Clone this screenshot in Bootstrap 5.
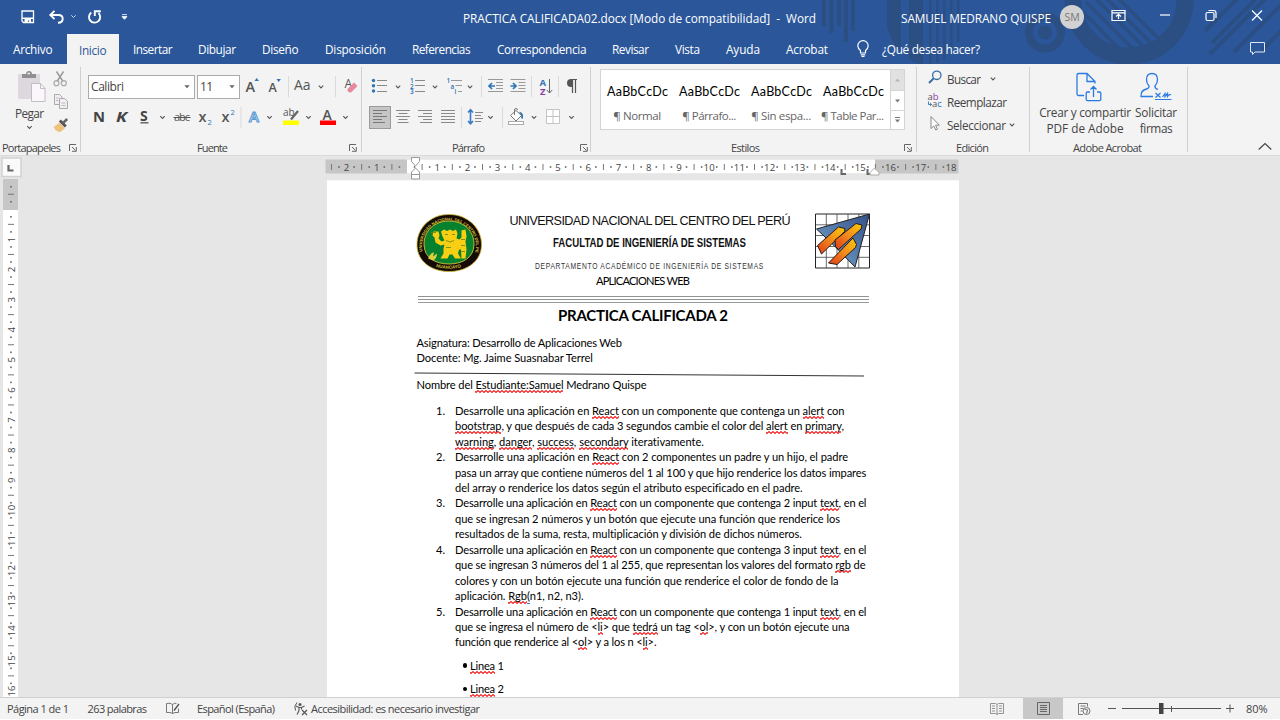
<!DOCTYPE html>
<html lang="es">
<head>
<meta charset="utf-8">
<meta name="viewport" content="width=device-width, initial-scale=1">
<title>PRACTICA CALIFICADA02.docx - Word</title>
<link href="https://cdn.jsdelivr.net/npm/bootstrap@5.3.0/dist/css/bootstrap.min.css" rel="stylesheet">
<style>
:root{--word:#2b579a;--word-dark:#2b4e83;--ink:#444;}
html,body{height:720px;overflow:hidden}
body{font-family:"Open Sans","Noto Sans",sans-serif;font-size:11.5px;line-height:14px;color:var(--ink);background:#e6e6e6;width:1280px}
svg{display:block;overflow:visible;flex:none}
.fit{display:inline-block;white-space:nowrap;transform-origin:0 50%}
.strip{display:grid;align-items:center}
.word-head{background:var(--word);height:64px;color:#fff;position:relative;flex:none}
.decor{position:absolute;inset:0;overflow:hidden}
.titlebar{height:34px;position:relative;grid-template-columns:28px 22px 17px 33px 342px 438px 159px 52px 48px 46px 46px 28px;padding-left:21px}
.titlebar .fit{font-size:11.8px;position:relative;top:1px}
.avatar{width:24px;height:24px;border-radius:50%;background:#d2d2d2;color:#777;font-size:10.5px}
.tabs{height:30px;position:relative;grid-template-columns:54px 66px 65px 64px 63px 87px 85px 115px 63px 51px 60px 71px 25px 368px 20px;padding-left:13px}
.tabs .fit{font-size:11.8px;position:relative;top:.7px}
.tabs .tab-on{background:#f3f3f3;color:var(--word);height:30px;width:52px;padding-left:12px}
.ribbon{background:#f3f3f3;height:92px;flex:none;border-bottom:1px solid #dadada}
.rgroup{border-right:1px solid #d0d0d0;margin:3px 0 3px;height:85px;display:flex;flex-direction:column;flex:none}
.rbody{height:73.5px;flex:none}
.rlabel{height:14px;font-size:11px;display:grid;align-items:center}
.g1{width:81px}.g1 .rlabel{grid-template-columns:67px 10px;padding-left:2px}
.g2{width:281px}.g2 .rlabel{grid-template-columns:152px 10px;padding-left:116px}
.g3{width:229px}.g3 .rlabel{grid-template-columns:128px 10px;padding-left:90px}
.g4{width:326px}.g4 .rlabel{grid-template-columns:173px 10px;padding-left:140px}
.g5{width:113px}.g5 .rlabel{padding-left:39px}
.g6{width:158px}.g6 .rlabel{padding-left:43px}
.g2 .rbody,.g3 .rbody{padding-top:7px}
.r25{height:25px;margin-bottom:6px}
.f1{grid-template-columns:109px 49px 23px 19px 6px 24px 16px 9px 20px;padding-left:7px}
.f2{grid-template-columns:22px 22px 19px 15px 25px 23px 18px 9px 15px 18px 21px 16px 22px 20px;padding-left:13px}
.p1{grid-template-columns:20px 17px 20px 17px 18px 16px 7px 22px 19px 9px 18px 9px 20px;padding-left:10px}
.p2{grid-template-columns:27px 22px 22px 19px 7px 16px 17px 7px 20px 18px 19px 18px;padding-left:7px}
.combo{background:#fff;border:1px solid #ababab;height:24px;font-size:12px;display:flex;align-items:center;justify-content:space-between;padding:0 4px 0 2px}
.combo-a{width:107px}.combo-b{width:43px}
.gallery{width:305px;height:61px;margin:2px 0 0 9px;background:#fff;border:1px solid #d4d4d4;display:flex}
.style-item{width:72px;padding-left:6px;flex:none;height:59px}
.style-item .samp{font-family:Lato,sans-serif;font-size:12.5px;color:#000;height:14px;margin-top:15px}
.style-item .nm{margin-top:10px;width:60px;text-align:center;color:#666;font-size:11.5px}
.scroller{width:15px;border-left:1px solid #d4d4d4;margin-left:1px}
.scroller div{height:20px;border-bottom:1px solid #d4d4d4}
.scroller div:first-child{background:#e1e1e1;height:21px}
.scroller div:last-child{border:0;height:18px}
.edit{display:grid;grid-template-columns:19px 43px 20px;height:23px;align-items:center;padding-left:11px;font-size:11.7px}
.edit.wide{grid-template-columns:19px 62px 20px}
.big{font-size:11.8px;line-height:16px}
.work{height:541px;flex:none;background:#e6e6e6;display:grid;grid-template-columns:327px 632px 1fr;overflow:hidden}
.sheet{background:#fff;height:520px;font-family:Lato,Carlito,sans-serif;font-size:11.1px;line-height:15.43px;color:#000;border-top:1px solid #f8f8f8}
.doc-head{display:grid;grid-template-columns:65px 26px 285px 20px 60px;padding:33px 0 0 90px;height:97px}
.dh{text-align:center;font-family:"Liberation Sans",sans-serif;color:#111}
.dh div{display:flex}
.dh1{font-size:12.6px;height:14px;padding-left:1.5px}
.dh2{font-size:12px;font-weight:700;height:15px;margin-top:8px;padding-left:45px}
.dh3{font-size:9.6px;letter-spacing:1px;height:14px;margin-top:7px;padding-left:27px;color:#333}
.rule3{width:451px;height:7px;margin-left:91px;border-top:1px solid #8f9491;border-bottom:1px solid #999}
.rule3 i{display:block;height:1px;margin-top:2px;background:#8f9491}
.web{padding-left:269px;margin-top:-6px;height:20px}
.h-title{font-weight:700;font-size:15px;line-height:18px;padding-left:231px;color:#000;height:29px;margin-top:2.5px}
.para{padding-left:89.5px}
ol.tasks{list-style:none;margin:17.5px 0 0;padding:0}
ol.tasks li{display:grid;grid-template-columns:19px 1fr;padding-left:109px}
ol.tasks li div>span{display:block;width:max-content}
.bul{padding-left:134px;margin-top:8px;display:flex;align-items:center}
.bul b{display:block;width:4.5px;height:4.5px;border-radius:50%;background:#000;margin:0 3px 0 1.5px}
.sq{background:url("data:image/svg+xml,%3Csvg xmlns='http://www.w3.org/2000/svg' width='4' height='3'%3E%3Cpath d='M-1 .5L1 2.5L3 .5L5 2.5' fill='none' stroke='%23f02020' stroke-width='1.1'/%3E%3C/svg%3E") repeat-x 0 100%;padding-bottom:2px}
.sq.gr{background:linear-gradient(#3b6fe0,#3b6fe0) no-repeat 0 100%/100% 1.5px}
.status{height:22px;background:#f3f3f3;border-top:1px solid #d0d0d0;flex:none;grid-template-columns:80.5px 78.500px 31px 97px 17px 679px 33px 40px 14px 30px 15px 105px 19px 30px;padding-left:7px;font-size:11px}
.view-on{background:#c8c8c8;height:21px}
</style>
</head>
<body class="d-flex flex-column">
<svg width="0" height="0" class="position-absolute">
 <symbol id="chev" viewBox="0 0 6 4"><path d="M.8 .7L3 2.9L5.2 .7" fill="none" stroke="#555" stroke-width="1.1"/></symbol>
 <symbol id="launch" viewBox="0 0 8 8"><path d="M.5 7V.5H7M3 3L6.5 6.5M7.3 3V7.3H3" fill="none" stroke="#666" stroke-width="1"/></symbol>
 <symbol id="tri" viewBox="0 0 6 4"><path d="M.3 .3H5.700L3 3.3Z" fill="#666"/></symbol>
</svg>

<header class="word-head">
 <svg class="decor" width="1280" height="64">
  <g fill="#2b4e83">
   <path d="M822 0h4v26h-4zM829.500 0h4v33h-4zM837 0h4v26h-4zM844 0h4v42h-4zM851 0h4v31h-4z"/>
   <path d="M887 0h14v52q-9-9-14-24zM909 0h14v64h-4q-5-2-10-5zM929 0h2.500v64h-2.500zM936 0h2.500v63h-2.500zM943 0h2.500v60h-2.500zM950 0h2.500v54h-2.500zM957 0h2.500v42h-2.500z"/>
   <circle cx="1045" cy="32.500" r="7"/>
  </g>
  <g fill="none" stroke="#2b4e83">
   <circle cx="1045" cy="32.500" r="16" stroke-width="8"/>
   <circle cx="1129" cy="0" r="56" stroke-width="17"/>
   <path d="M1083 12L1127 57M1086 2L1138 54M1095-2L1146 49M1106-2L1155 47M1118-2L1163 43" stroke-width="3.500"/>
   <path d="M1205 31L1238-2M1212 43L1257-2M1210 54L1266-2M1234 52L1288-2M1262 50L1292 20" stroke-width="4"/>
  </g>
 </svg>
 <div class="strip titlebar">
  <svg width="14" height="34" viewBox="21 0 14 34"><path d="M22 11h11.500v11.500H23.500L22 21z" fill="none" stroke="#fff" stroke-width="1.300"/><path d="M22 17.500h11.500v1.500h-11.500zM24.500 19h6.500v4h-1.800v-2.500h-1.200v2.500h-3.500z" fill="#fff"/></svg>
  <svg width="16" height="34" viewBox="49 0 16 34"><path d="M54.500 10.800L50.300 15L54.500 19.200M50.500 15H58.500C61.300 15 62.700 16.800 62.700 18.800S61.200 22.800 58 22.800" fill="none" stroke="#fff" stroke-width="1.900"/></svg>
  <svg width="6" height="34" viewBox="71 0 6 34"><path d="M71.300 15.300L73.500 17.500L75.700 15.300" fill="none" stroke="#cdd8ea" stroke-width="1"/></svg>
  <svg width="14" height="34" viewBox="88 0 14 34"><path d="M91.300 12.500A5.600 5.600 0 1 0 98.500 13M94.800 16V11.200H100.800" fill="none" stroke="#fff" stroke-width="1.900"/></svg>
  <svg width="6" height="34" viewBox="121 0 6 34"><path d="M122 14.600h5M122 16.600h5L124.500 19.300z" stroke="#fff" fill="#fff" stroke-width=".8"/></svg>
  <span><span class="fit" data-w="353">PRACTICA CALIFICADA02.docx [Modo de compatibilidad]&nbsp; -&nbsp; Word</span></span>
  <span><span class="fit" data-w="150">SAMUEL MEDRANO QUISPE</span></span>
  <span class="avatar d-flex align-items-center justify-content-center">SM</span>
  <svg width="14" height="34" viewBox="1112 0 14 34"><path d="M1112 10.500h13v10h-13zM1112 12.800h13M1118.500 19v-4.500M1116 16.500l2.500-2.300l2.500 2.300" fill="none" stroke="#fff" stroke-width="1.200"/></svg>
  <svg width="11" height="34" viewBox="1160 0 11 34"><path d="M1160 15h10" stroke="#fff" stroke-width="1.200"/></svg>
  <svg width="11" height="34" viewBox="1206 0 11 34"><rect x="1206" y="12.500" width="8" height="8" rx="1.500" fill="none" stroke="#fff" stroke-width="1.200"/><path d="M1208.500 10.500h5q2.500 0 2.500 2.500v5" fill="none" stroke="#fff" stroke-width="1.200"/></svg>
  <svg width="11" height="34" viewBox="1252 0 11 34"><path d="M1252 10.500l10 10M1262 10.500l-10 10" stroke="#fff" stroke-width="1.200"/></svg>
 </div>
 <nav class="strip tabs">
  <span><span class="fit" data-w="39.500">Archivo</span></span>
  <span class="tab-on d-flex align-items-center"><span class="fit" data-w="27.500">Inicio</span></span>
  <span><span class="fit" data-w="39.500">Insertar</span></span>
  <span><span class="fit" data-w="38">Dibujar</span></span>
  <span><span class="fit" data-w="36.500">Diseño</span></span>
  <span><span class="fit" data-w="61">Disposición</span></span>
  <span><span class="fit" data-w="58.500">Referencias</span></span>
  <span><span class="fit" data-w="89.500">Correspondencia</span></span>
  <span><span class="fit" data-w="37">Revisar</span></span>
  <span><span class="fit" data-w="25">Vista</span></span>
  <span><span class="fit" data-w="34">Ayuda</span></span>
  <span><span class="fit" data-w="42">Acrobat</span></span>
  <svg width="12" height="30" viewBox="857 34 12 30"><path d="M860.500 53V50.500Q857.800 48.500 857.800 45.800A5.200 5.200 0 0 1 868.200 45.800Q868.200 48.500 865.500 50.500V53zM860.800 54.800h4.400M861.500 56.500h3" fill="none" stroke="#fff" stroke-width="1.200"/></svg>
  <span><span class="fit" data-w="98">¿Qué desea hacer?</span></span>
  <svg width="16" height="30" viewBox="1250 34 16 30"><path d="M1250.500 42.500h14v9.500h-9.500l-2.500 2.500v-2.500h-2z" fill="none" stroke="#dfe7f3" stroke-width="1"/></svg>
 </nav>
</header>

<section class="ribbon d-flex">
 <div class="rgroup g1">
  <div class="rbody d-flex">
   <div style="width:53px">
    <svg width="53" height="38" viewBox="0 67 53 38"><rect x="18" y="74" width="22" height="25" rx="1" fill="#dcd8de"/><path d="M22 74h4q0-3 3-3t3 3h4v4H22z" fill="#8f8f8f"/><rect x="27.500" y="72.800" width="2.500" height="1.500" fill="#f3f3f3"/><path d="M31.500 83.500h9l4.500 5v13H31.500z" fill="#faf6fb" stroke="#bdb7c0" stroke-width=".9"/><path d="M40.500 83.500v5h4.500" fill="none" stroke="#bdb7c0" stroke-width=".9"/></svg>
    <div class="big ps-3"><span class="fit" data-w="29" style="margin-left:-1px">Pegar</span></div>
    <svg width="53" height="10" viewBox="0 121 53 10"><use href="#chev" x="26.500" y="125.500" width="6" height="4"/></svg>
   </div>
   <svg width="18" height="70" viewBox="53 67 18 70">
    <path d="M56.500 71.500L63 81.500M63.500 71.500L57 81.500" stroke="#999" stroke-width="1.400"/><circle cx="56.500" cy="83.200" r="2.500" fill="none" stroke="#aaa" stroke-width="1.200"/><circle cx="63.800" cy="83.200" r="2.500" fill="none" stroke="#aaa" stroke-width="1.200"/>
    <path d="M54.500 94.500h5l2.500 2.500v7.500h-7.500z" fill="#f3eef4" stroke="#aaa"/><path d="M59.500 98.500h5l3 2.800v7.200h-8z" fill="#f3eef4" stroke="#aaa"/><path d="M61.500 103h4M61.500 105.500h4M56 98h2.500M56 100.500h2.500" stroke="#bbb"/>
    <path d="M53.500 127l6-4.300l5.500 5.500l-5 4q-4.500-1-6.500-5.200z" fill="#ecc27d"/><path d="M58.800 121.500l6 6l2-2l-6-6z" fill="#555"/><path d="M63.500 122.500L67.200 119" stroke="#666" stroke-width="2.500"/>
   </svg>
  </div>
  <div class="rlabel"><span><span class="fit" data-w="59">Portapapeles</span></span><svg width="8" height="8"><use href="#launch" width="8" height="8"/></svg></div>
 </div>

 <div class="rgroup g2">
  <div class="rbody">
   <div class="strip r25 f1">
    <span class="combo combo-a"><span class="fit" data-w="33">Calibri</span><svg width="6" height="4"><use href="#tri" width="6" height="4"/></svg></span>
    <span class="combo combo-b"><span class="fit" data-w="13">11</span><svg width="6" height="4"><use href="#tri" width="6" height="4"/></svg></span>
    <svg width="16" height="25" viewBox="246 74 16 25"><text x="245.500" y="92" font-size="14.500" font-weight="600" fill="#555">A</text><path d="M254.500 81l2.200-3l2.200 3z" fill="#2f74b5"/></svg>
    <svg width="16" height="25" viewBox="269 74 16 25"><text x="268.500" y="92" font-size="12.500" font-weight="600" fill="#555">A</text><path d="M276.500 79l2.200 3l2.200-3z" fill="#2f74b5"/></svg>
    <svg width="2" height="25" viewBox="288 74 2 25"><path d="M288.500 76v21" stroke="#dadada"/></svg>
    <svg width="18" height="25" viewBox="294 74 18 25"><text x="294" y="90" font-size="14" fill="#555">Aa</text></svg>
    <svg width="6" height="4"><use href="#chev" width="6" height="4"/></svg>
    <svg width="2" height="25" viewBox="327 74 2 25"><path d="M328.500 76v21" stroke="#dadada"/></svg>
    <svg width="16" height="25" viewBox="336 74 16 25"><text x="337.500" y="88" font-size="12" fill="#555">A</text><path d="M340.500 89l6.500-6.500l3.500 3.500l-6.500 6.500q-4 0-3.500-3.500z" fill="#e8889c"/></svg>
   </div>
   <div class="strip r25 f2">
    <svg width="14" height="25" viewBox="94 105 14 25"><text x="93" y="122" font-size="15" font-weight="700" fill="#444" textLength="12" lengthAdjust="spacingAndGlyphs">N</text></svg>
    <svg width="14" height="25" viewBox="116 105 14 25"><text x="116" y="122" font-size="15" font-weight="700" font-style="italic" fill="#444" textLength="11" lengthAdjust="spacingAndGlyphs">K</text></svg>
    <svg width="12" height="25" viewBox="138 105 12 25"><text x="140" y="121" font-size="14" font-weight="700" fill="#444">S</text><path d="M140.500 122.800h8" stroke="#444" stroke-width="1.200"/></svg>
    <svg width="12" height="25" viewBox="157 105 12 25"><use href="#chev" x="159.500" y="115.500" width="6" height="4"/></svg>
    <svg width="18" height="25" viewBox="172 105 18 25"><text x="174" y="121" font-size="11" fill="#555" textLength="16">abc</text><path d="M173.500 117.500h17" stroke="#555"/></svg>
    <svg width="16" height="25" viewBox="197 105 16 25"><text x="198.500" y="122" font-size="14.500" font-weight="600" fill="#555">x</text><text x="207.500" y="124.500" font-size="7.500" fill="#2f74b5">2</text></svg>
    <svg width="16" height="25" viewBox="220 105 16 25"><text x="221.500" y="122" font-size="14.500" font-weight="600" fill="#555">x</text><text x="230.500" y="114.500" font-size="7.500" fill="#2f74b5">2</text></svg>
    <svg width="4" height="25" viewBox="238 105 4 25"><path d="M241 107v21" stroke="#dadada"/></svg>
    <svg width="14" height="25" viewBox="247 105 14 25"><text x="249" y="122" font-size="15" font-weight="600" fill="#fff" stroke="#5b9bd5" stroke-width="1.100">A</text></svg>
    <svg width="10" height="25" viewBox="262 105 10 25"><use href="#chev" x="266.500" y="115.500" width="6" height="4"/></svg>
    <svg width="18" height="25" viewBox="280 105 18 25"><text x="283" y="116" font-size="10" fill="#555">ab</text><path d="M291 119.500L298 111" stroke="#666" stroke-width="2.200"/><rect x="283" y="120.500" width="16" height="4.500" fill="#ff0"/></svg>
    <svg width="10" height="25" viewBox="301 105 10 25"><use href="#chev" x="305.500" y="115.500" width="6" height="4"/></svg>
    <svg width="18" height="25" viewBox="317 105 18 25"><text x="322.500" y="119.500" font-size="14" font-weight="600" fill="#555">A</text><rect x="320" y="120.500" width="16" height="4.500" fill="#f00"/></svg>
    <svg width="10" height="25" viewBox="339 105 10 25"><use href="#chev" x="342.500" y="115.500" width="6" height="4"/></svg>
   </div>
  </div>
  <div class="rlabel"><span><span class="fit" data-w="31">Fuente</span></span><svg width="8" height="8"><use href="#launch" width="8" height="8"/></svg></div>
 </div>

 <div class="rgroup g3">
  <div class="rbody">
   <div class="strip r25 p1">
    <svg width="18" height="25" viewBox="373 74 18 25"><path d="M378 80.500h10M378 85.500h10M378 91.500h10" stroke="#888"/><circle cx="374.500" cy="80.500" r="1.700" fill="#2f74b5"/><circle cx="374.500" cy="85.800" r="1.700" fill="#2f74b5"/><circle cx="374.500" cy="91" r="1.700" fill="#2f74b5"/></svg>
    <svg width="8" height="25" viewBox="392 74 8 25"><use href="#chev" x="395" y="85" width="6" height="4"/></svg>
    <svg width="18" height="25" viewBox="409 74 18 25"><path d="M415 80.500h10M415 85.500h10M415 91.500h10" stroke="#888"/><g font-size="6.500" font-weight="600" fill="#2f74b5"><text x="410" y="83">1</text><text x="410" y="88.500">2</text><text x="410" y="94">3</text></g></svg>
    <svg width="8" height="25" viewBox="429 74 8 25"><use href="#chev" x="432" y="85" width="6" height="4"/></svg>
    <svg width="18" height="25" viewBox="446 74 18 25"><path d="M451 80.500h11M455.500 85.500h6.500M458 91.500h4" stroke="#999"/><g font-size="6.500" font-weight="600" fill="#2f74b5"><text x="446.500" y="83">1</text><text x="450.500" y="88.500">a</text><text x="454.500" y="93.500">i</text></g></svg>
    <svg width="8" height="25" viewBox="464 74 8 25"><use href="#chev" x="467" y="85" width="6" height="4"/></svg>
    <svg width="2" height="25" viewBox="480 74 2 25"><path d="M481.500 76v21" stroke="#dadada"/></svg>
    <svg width="16" height="25" viewBox="487 74 16 25"><path d="M488 79.500h15M496 82.500h7M496 85.500h7M496 88.500h7M488 91.500h15" stroke="#999"/><path d="M495 86h-5M492 83l-3 3l3 3" fill="none" stroke="#2f74b5" stroke-width="1.700"/></svg>
    <svg width="16" height="25" viewBox="509 74 16 25"><path d="M510.500 79.500h15M518.500 82.500h7M518.500 85.500h7M518.500 88.500h7M510.500 91.500h15" stroke="#999"/><path d="M510.500 86h5M513 83l3 3l-3 3" fill="none" stroke="#2f74b5" stroke-width="1.700"/></svg>
    <svg width="4" height="25" viewBox="528 74 4 25"><path d="M531.500 76v21" stroke="#dadada"/></svg>
    <svg width="16" height="25" viewBox="537 74 16 25"><text x="539.500" y="86" font-size="9.500" font-weight="700" fill="#2f74b5">A</text><text x="540" y="94.500" font-size="9.500" font-weight="700" fill="#8a3fa8">Z</text><path d="M549.500 79v14M546.800 90l2.700 3l2.700-3" fill="none" stroke="#666"/></svg>
    <svg width="4" height="25" viewBox="555 74 4 25"><path d="M558.500 76v21" stroke="#dadada"/></svg>
    <svg width="14" height="25" viewBox="564 74 14 25"><path d="M577 79.500h-6M572.500 79.500v13.500M575.500 79.500v13.500" fill="none" stroke="#555" stroke-width="1.200"/><path d="M572 79h-1q-4 0-4 4t4 4h1z" fill="#555"/></svg>
   </div>
   <div class="strip r25 p2">
    <svg width="23" height="25" viewBox="369 105 23 25"><rect x="369.500" y="106.500" width="21" height="22" fill="#c6c6c6" stroke="#9b9b9b"/><path d="M373 110.500h14M373 113.500h9M373 116.500h14M373 119.500h9M373 122.500h12" stroke="#777"/></svg>
    <svg width="16" height="25" viewBox="396 105 16 25"><path d="M396 110.500h14M398.500 113.500h9M396 116.500h14M398.500 119.500h9M397.500 122.500h11" stroke="#888"/></svg>
    <svg width="16" height="25" viewBox="418 105 16 25"><path d="M418 110.500h14M423 113.500h9M418 116.500h14M423 119.500h9M420 122.500h12" stroke="#888"/></svg>
    <svg width="16" height="25" viewBox="440 105 16 25"><path d="M441 110.500h14M441 113.500h14M441 116.500h14M441 119.500h14M441 122.500h14" stroke="#888"/></svg>
    <svg width="4" height="25" viewBox="459 105 4 25"><path d="M461.500 107v21" stroke="#dadada"/></svg>
    <svg width="16" height="25" viewBox="466 105 16 25"><path d="M475 112.500h8M475 115.500h6M475 118.500h8M475 121.500h6" stroke="#888"/><path d="M470.500 110v13.500M468 112.500l2.500-2.700l2.500 2.700M468 121l2.500 2.700l2.500-2.700" fill="none" stroke="#3a78c9" stroke-width="1.600"/></svg>
    <svg width="10" height="25" viewBox="482 105 10 25"><use href="#chev" x="487.500" y="115.500" width="6" height="4"/></svg>
    <svg width="4" height="25" viewBox="499 105 4 25"><path d="M502.500 107v21" stroke="#dadada"/></svg>
    <svg width="18" height="25" viewBox="506 105 18 25"><path d="M510.500 115.500l5.500-5l5.500 5l-5.500 5.500z" fill="#fff" stroke="#777"/><path d="M514.500 115v-5q0-1.500 1.500-1.500t1.500 1.500" fill="none" stroke="#777"/><path d="M519.500 112.500q3.500 1 2.500 6" fill="none" stroke="#2f74b5" stroke-width="1.800"/><rect x="508.500" y="121.500" width="15" height="3" fill="#fff" stroke="#aaa"/></svg>
    <svg width="10" height="25" viewBox="526 105 10 25"><use href="#chev" x="531" y="115.500" width="6" height="4"/></svg>
    <svg width="18" height="25" viewBox="544 105 18 25"><path d="M546.500 109.500h13v14h-13zM553 109.500v14M546.500 116.500h13" fill="#fff" stroke="#c4c4c4"/></svg>
    <svg width="10" height="25" viewBox="563 105 10 25"><use href="#chev" x="568.500" y="115.500" width="6" height="4"/></svg>
   </div>
  </div>
  <div class="rlabel"><span><span class="fit" data-w="33">Párrafo</span></span><svg width="8" height="8"><use href="#launch" width="8" height="8"/></svg></div>
 </div>

 <div class="rgroup g4">
  <div class="rbody">
   <div class="gallery">
    <div class="style-item"><div class="samp"><span class="fit" data-w="61">AaBbCcDc</span></div><div class="nm"><span class="fit" data-w="48">¶ Normal</span></div></div>
    <div class="style-item"><div class="samp"><span class="fit" data-w="61">AaBbCcDc</span></div><div class="nm"><span class="fit" data-w="54">¶ Párrafo...</span></div></div>
    <div class="style-item"><div class="samp"><span class="fit" data-w="61">AaBbCcDc</span></div><div class="nm"><span class="fit" data-w="60">¶ Sin espa...</span></div></div>
    <div class="style-item"><div class="samp"><span class="fit" data-w="61">AaBbCcDc</span></div><div class="nm"><span class="fit" data-w="63" style="margin-left:-2px">¶ Table Par...</span></div></div>
    <div class="scroller">
     <div class="d-flex align-items-center justify-content-center"><svg width="5" height="4"><path d="M0 3.500L2.500 .5L5 3.500z" fill="#b5b5b5"/></svg></div>
     <div class="d-flex align-items-center justify-content-center"><svg width="5" height="4"><path d="M0 .5h5L2.500 3.500z" fill="#777"/></svg></div>
     <div class="d-flex align-items-center justify-content-center"><svg width="5" height="6"><path d="M0 0h5v1H0zM0 2.500h5L2.500 5.500z" fill="#777"/></svg></div>
    </div>
   </div>
  </div>
  <div class="rlabel"><span><span class="fit" data-w="29">Estilos</span></span><svg width="8" height="8"><use href="#launch" width="8" height="8"/></svg></div>
 </div>

 <div class="rgroup g5">
  <div class="rbody">
   <div class="edit"><svg width="16" height="23" viewBox="928 67 16 23"><circle cx="936.800" cy="75.300" r="4.200" fill="none" stroke="#3a6ea5" stroke-width="1.300"/><path d="M933.500 78.500L929 83" stroke="#3a6ea5" stroke-width="2"/></svg><span><span class="fit" data-w="34">Buscar</span></span><svg width="6" height="4"><use href="#chev" width="6" height="4"/></svg></div>
   <div class="edit wide"><svg width="16" height="23" viewBox="928 90 16 23"><text x="927.500" y="100" font-size="9.500" fill="#555">a<tspan fill="#8a3fa8">b</tspan></text><text x="932" y="107" font-size="9.500" fill="#555">a<tspan fill="#2f74b5">c</tspan></text><path d="M928.500 101.500v3h3M930 103l1.700 1.500L930 106" fill="none" stroke="#2f74b5" stroke-width=".9"/></svg><span><span class="fit" data-w="60">Reemplazar</span></span></div>
   <div class="edit wide"><svg width="16" height="23" viewBox="928 113 16 23"><path d="M931 116.500v12l2.800-2.500l2 4l1.700-.9l-2-3.900h3.800z" fill="#fff" stroke="#888"/></svg><span><span class="fit" data-w="59">Seleccionar</span></span><svg width="6" height="4"><use href="#chev" width="6" height="4"/></svg></div>
  </div>
  <div class="rlabel"><span><span class="fit" data-w="33">Edición</span></span></div>
 </div>

 <div class="rgroup g6">
  <div class="rbody d-flex">
   <div class="big text-center" style="width:96px;margin-left:7px">
    <svg width="96" height="37" viewBox="1037 67 96 37"><g fill="none" stroke="#2a7ae4" stroke-width="1.300"><path d="M1084 95.500h-5.500q-1.500 0-1.500-1.500V75q0-1.500 1.500-1.500H1087l8 8v2M1087 73.500v8h8"/><path d="M1090 92h-2.500q-1.300 0-1.300 1.300v6q0 1.300 1.300 1.300h12q1.300 0 1.300-1.300v-6q0-1.300-1.300-1.300h-2.500M1093.500 97v-10M1090.500 89.500l3-3l3 3"/></g></svg>
    <span class="fit" data-w="92">Crear y compartir</span><br><span class="fit" data-w="77">PDF de Adobe</span>
   </div>
   <div class="big text-center" style="width:44px;margin-left:1px">
    <svg width="44" height="37" viewBox="1134 67 44 37"><g fill="none" stroke="#2a7ae4" stroke-width="1.300"><path d="M1153 96.500h-12q-.5-6 5.500-7.500q3-.8 2.500-3q-2.500-2.500-2.500-6.500q0-6 5.500-6t5.500 6q0 4-2.500 6.500q-.3 2.500 3 3.500"/><path d="M1155 99.500h16.500M1155.500 93l5 4.500M1160.500 93l-5 4.500M1162.500 97l2.500-3.500v3l2.500-3v3q2-3 3.500-1.500" stroke-width="1.200"/></g></svg>
    <span class="fit" data-w="42">Solicitar</span><br><span class="fit" data-w="33">firmas</span>
   </div>
  </div>
  <div class="rlabel"><span><span class="fit" data-w="69">Adobe Acrobat</span></span></div>
 </div>
 <svg class="ms-auto me-2 mt-auto mb-1" width="14" height="9"><path d="M.7 7.500L7 1.500L13.300 7.500" fill="none" stroke="#444" stroke-width="1.200"/></svg>
</section>

<main class="work">
 <svg id="vruler" width="327" height="541" viewBox="0 156 327 541">
  <rect x="2" y="158" width="19" height="18.500" fill="#fafafa" stroke="#d2d2d2" stroke-width="1.500"/><path d="M8.500 165v5.500h5" fill="none" stroke="#666" stroke-width="2.200"/>
  <rect x="3" y="179" width="15" height="31" fill="#c6c6c6"/><rect x="3" y="210" width="15" height="490" fill="#fff"/>
 </svg>
 <div>
  <svg id="hruler" width="632" height="24" viewBox="327 156 632 24">
   <rect x="325.500" y="159.500" width="633" height="14" fill="#c6c6c6"/><rect x="407" y="159.500" width="468" height="14" fill="#fff"/>
  </svg>
  <article class="sheet">
   <div class="doc-head">
    <svg width="65" height="58" viewBox="417 214.500 65 58">
     <path id="seal" d="M449 215C468 215 482 229 481.500 246C481 262 467 272 449 272S417.500 262 417 246C416.500 229 430 215 449 215z" fill="#150a05" stroke="#c9b52a" stroke-width=".8"/>
     <path d="M449 221.500C464 221.500 474.500 232 474 245.500C473.500 258 463 264.500 449 264.500S424.500 258 424 245.500C423.500 232 434 221.500 449 221.500z" fill="#08812f" stroke="#e8d640" stroke-width=".8"/>
     <path id="arcTop" d="M422.500 252A27 26 0 1 1 475.500 252" fill="none"/><path id="arcBot" d="M433 266.500Q449 272 465 266.500" fill="none"/>
     <text font-family="Liberation Sans" font-size="4.200" font-weight="700" fill="#d8c43c"><textPath href="#arcTop" textLength="100">UNIVERSIDAD NACIONAL DEL CENTRO DEL PERÚ</textPath></text>
     <text font-family="Liberation Sans" font-size="4.500" font-weight="700" fill="#d8c43c"><textPath href="#arcBot" startOffset="3">HUANCAYO</textPath></text>
     <path d="M441 232l3-2l3 1.500l3-1.500l3 1.500l3-1.500l1.500 4l-1 5l3 1l2-2v-7l4-1l1 7l-1 5l1 8l-1 9h-4l-.5-9h-2l-1 4l3 5h-6l-2.500-4h-3l-2 4h-7l3-5v-5l1-4l-4 1l-5-3l-1-5l-2-2l1-4h5l1 4l-1 3l3 3l3-1l-2-4z" fill="#f9cf14"/>
     <path d="M428 259q3-7 6-6l-1 4l4-3q0 5-4 7z" fill="#d9cf3c"/><path d="M445 235h3M452 235h3M446 241l4 1.500l4-1.500M446 248h5M461 240h4M461 246h4M461 252h4M431 233h5" stroke="#6d8d12" stroke-width=".9" fill="none"/>
    </svg>
    <i></i>
    <div class="dh">
     <div class="dh1"><span class="fit" data-w="281">UNIVERSIDAD NACIONAL DEL CENTRO DEL PERÚ</span></div>
     <div class="dh2"><span class="fit" data-w="193" data-mode="scale">FACULTAD DE INGENIERÍA DE SISTEMAS</span></div>
     <div class="dh3"><span class="fit" data-w="229" data-mode="scale">DEPARTAMENTO ACADÉMICO DE INGENIERÍA DE SISTEMAS</span></div>
    </div>
    <i></i>
    <svg width="60" height="58" viewBox="813 214.500 60 58">
     <defs><linearGradient id="org" x1="1" y1="0" x2="0" y2="1"><stop offset="0" stop-color="#fccb0a"/><stop offset=".5" stop-color="#f28a1c"/><stop offset="1" stop-color="#e03a18"/></linearGradient><linearGradient id="blu" x1="1" y1="0" x2="0" y2="1"><stop offset="0" stop-color="#34508a"/><stop offset="1" stop-color="#79a9cf"/></linearGradient></defs>
     <path d="M815.500 214.500h54v54h-54z" fill="#fff" stroke="#222"/><path d="M826.300 214.500v54M837 214.500v54M848 214.500v54M858.800 214.500v54M815.500 225.300h54M815.500 236h54M815.500 247h54M815.500 257.800h54" stroke="#444" stroke-width=".8"/>
     <path d="M869.500 214.500L816.500 229.500L834 246L855 267.500z" fill="url(#blu)" stroke="#222"/>
     <g fill="url(#org)" stroke="#2a1a12" stroke-width="1"><path d="M838.500 227.500l6.500 1.500l-.5 3L821.500 254.500l-4-8.500z"/><path d="M856 224l6 1.500l-1 4L838.500 250l-3-3l-.5-6.500z"/><path d="M853 238.500l3.500 6.500l-1 3L837 265l-8.500-1.500z"/></g>
    </svg>
   </div>
   <div class="web" style="padding-top:1px"><span class="fit" data-w="94">APLICACIONES WEB</span></div>
   <div class="rule3 mt-1"><i></i></div>
   <div class="h-title"><span class="fit" data-w="170">PRACTICA CALIFICADA 2</span></div>
   <div class="para"><span class="fit" data-w="205.500">Asignatura: Desarrollo de Aplicaciones Web</span></div>
   <div class="para"><span class="fit" data-w="176.500">Docente: Mg. Jaime Suasnabar Terrel</span></div>
   <svg width="632" height="11.500" viewBox="327 366.500 632 11.500"><path d="M414.500 374.500L864 377.500" stroke="#333" stroke-width="1"/></svg>
   <div class="para"><span class="fit" data-w="230">Nombre del <span class="sq">Estudiante:Samuel</span> Medrano Quispe</span></div>
   <ol class="tasks" style="margin-top:10.500px">
    <li><span>1.</span><div><span class="fit" data-w="389.500">Desarrolle una aplicación en <span class="sq">React</span> con un componente que contenga un <span class="sq">alert</span> con</span><span class="fit" data-w="389"><span class="sq">bootstrap</span>, y que después de cada 3 segundos cambie el color del <span class="sq">alert</span> en <span class="sq">primary</span>,</span><span class="fit" data-w="249"><span class="sq">warning</span>, <span class="sq">danger</span>, <span class="sq">success</span>, <span class="sq">secondary</span> iterativamente.</span></div></li>
    <li><span>2.</span><div><span class="fit" data-w="393">Desarrolle una aplicación en <span class="sq">React</span> con 2 componentes un padre y un hijo, el padre</span><span class="fit" data-w="411.500">pasa un array que contiene números del 1 al 100 y que hijo renderice los datos impares</span><span class="fit" data-w="347.500">del array o renderice los datos según el atributo especificado en el padre.</span></div></li>
    <li><span>3.</span><div><span class="fit" data-w="411.500">Desarrolle una aplicación en <span class="sq">React</span> con un componente que contenga 2 input <span class="sq">text</span>, en el</span><span class="fit" data-w="385">que se ingresan 2 números y un botón que ejecute una función que renderice los</span><span class="fit" data-w="347">resultados de la suma, resta, multiplicación y división de dichos números.</span></div></li>
    <li><span>4.</span><div><span class="fit" data-w="411.500">Desarrolle una aplicación en <span class="sq">React</span> con un componente que contenga 3 input <span class="sq">text</span>, en el</span><span class="fit" data-w="410.500">que se ingresan 3 números del 1 al 255, que representan los valores del formato <span class="sq">rgb</span> de</span><span class="fit" data-w="383.500">colores y con un botón ejecute una función que renderice el color de fondo de la</span><span class="fit" data-w="128.500">aplicación. <span class="sq">Rgb</span><span class="sq gr">(</span>n1, n2, n3).</span></div></li>
    <li><span>5.</span><div><span class="fit" data-w="411.500">Desarrolle una aplicación en <span class="sq">React</span> con un componente que contenga 1 input <span class="sq">text</span>, en el</span><span class="fit" data-w="394.500">que se ingresa el número de &lt;<span class="sq">li</span>&gt; que <span class="sq">tedrá</span> un tag &lt;<span class="sq">ol</span>&gt;, y con un botón ejecute una</span><span class="fit" data-w="201.500">función que renderice al &lt;<span class="sq">ol</span>&gt; y a los n &lt;<span class="sq">li</span>&gt;.</span></div></li>
   </ol>
   <div class="bul"><b></b><span class="fit" data-w="34"><span class="sq">Linea</span> 1</span></div>
   <div class="bul"><b></b><span class="fit" data-w="34"><span class="sq">Linea</span> 2</span></div>
  </article>
 </div>
 <div></div>
</main>

<footer class="strip status">
 <span><span class="fit" data-w="62">Página 1 de 1</span></span>
 <span><span class="fit" data-w="59.500">263 palabras</span></span>
 <svg width="14" height="21" viewBox="166 698 14 21"><path d="M166.500 703.500q4-1 6 1q2-2 4-1M172.500 704.500v9M166.500 703.500v9q4-.5 6 1q2-1.500 6-1v-4" fill="none" stroke="#777"/><path d="M174 710.500l5-6.500" stroke="#555" stroke-width="1.400"/></svg>
 <span><span class="fit" data-w="78">Español (España)</span></span>
 <svg width="14" height="21" viewBox="294 698 14 21"><circle cx="300" cy="704.500" r="1.500" fill="#555"/><path d="M296 706l3 1.500h2.500l3-1.500M299 707.500v3l-2 4M301.500 707.500v2" fill="none" stroke="#555" stroke-width="1.100"/><path d="M297 702.500q-3.500 3.500-1.500 8" fill="none" stroke="#555"/><path d="M302 710l5 5M307 710l-5 5" stroke="#555" stroke-width="1.200"/></svg>
 <span><span class="fit" data-w="169">Accesibilidad: es necesario investigar</span></span>
 <svg width="14" height="21" viewBox="997 698 14 21"><path d="M997.500 703.500h5l1.500 1l1.500-1h5v10h-5l-1.500 1l-1.500-1h-5zM1004 704.500v10M999 706h3M999 708.500h3M999 711h3M1006 706h3M1006 708.500h3M1006 711h3" fill="none" stroke="#888" stroke-width=".9"/></svg>
 <span class="view-on d-flex justify-content-center align-items-center"><svg width="13" height="21" viewBox="1037 698 13 21"><path d="M1037.500 702.500h12v12h-12zM1040 705.500h7M1040 707.500h7M1040 709.500h7M1040 711.500h7" fill="none" stroke="#666" stroke-width="1"/></svg></span>
 <i></i>
 <svg width="14" height="21" viewBox="1077 698 14 21"><path d="M1083 714.500h-4.500v-11h9v3M1080.500 706h5M1080.500 708.500h3M1080.500 711h2" fill="none" stroke="#777"/><circle cx="1086.500" cy="711" r="3.500" fill="#f3f3f3" stroke="#777"/><path d="M1084.500 709l3 1l-1 3.500" fill="none" stroke="#666"/></svg>
 <svg width="10" height="21" viewBox="1107 698 10 21"><path d="M1108 708.500h8" stroke="#555"/></svg>
 <svg width="100" height="21" viewBox="1122 698 100 21"><path d="M1122 708.500h99" stroke="#555"/><path d="M1171.500 706v6" stroke="#555"/><rect x="1159" y="703" width="4.500" height="11" fill="#444"/></svg>
 <svg width="9" height="21" viewBox="1227 698 9 21"><path d="M1226 708.500h8M1230 704.500v8" stroke="#555"/></svg>
 <span><span class="fit" data-w="21.500">80%</span></span>
</footer>
<div class="bg-white" style="height:1px"></div>

<script src="https://cdn.jsdelivr.net/npm/bootstrap@5.3.0/dist/js/bootstrap.bundle.min.js"></script>
<script>
document.querySelectorAll('.fit').forEach(el => {
  const target = parseFloat(el.dataset.w), w = el.getBoundingClientRect().width;
  if (el.dataset.mode === 'scale') el.style.transform = `scaleX(${target / w})`;
  else el.style.letterSpacing = ((target - w) / (el.textContent.length - 1)).toFixed(4) + 'px';
});
// Ruler marks: a label each centimetre, a tick at the half, dots at the quarters.
const NS = 'http://www.w3.org/2000/svg';
function add(svg, tag, attrs, text) {
  const e = document.createElementNS(NS, tag);
  for (const k in attrs) e.setAttribute(k, attrs[k]);
  if (text) e.textContent = text;
  svg.appendChild(e);
}
function ruler(svg, zero, step, from, to, min, max, vertical) {
  const place = p => vertical ? `translate(11 ${p}) rotate(-90)` : `translate(${p} 167)`;
  for (let q = from * 4; q <= to * 4; q++) {
    const p = zero + step * q / 4;
    if (p < min || p > max || q === 0) continue;
    if (q % 4 === 0) add(svg, 'text', {transform: place(p), y: 3.5, 'text-anchor': 'middle', 'font-size': 9.6, fill: '#444', 'letter-spacing': .1}, String(Math.abs(q / 4)));
    else if (q % 2 === 0) add(svg, 'path', {transform: place(p), d: 'M0 -3V3', stroke: '#777'});
    else add(svg, 'rect', {transform: place(p), x: -.8, y: -.8, width: 1.6, height: 1.6, fill: '#666'});
  }
}
const h = document.getElementById('hruler');
ruler(h, 407, 30.22, -3, 19, 328, 958, false);
add(h, 'path', {d: 'M411.500 157.500h8v4l-4 4.500l-4-4.500zM415.500 168l4 4v7h-8v-7zM411.500 174.500h8', fill: '#fff', stroke: '#999'});
add(h, 'path', {d: 'M841.500 169v5h4.500M867.500 169v5h4.500', fill: 'none', stroke: '#666', 'stroke-width': 2});
add(h, 'path', {d: 'M874.500 168l4.500 4.500v2.500h-9v-2.500z', fill: '#fff', stroke: '#aaa'});
ruler(document.getElementById('vruler'), 209.3, 30.1, -1, 16, 181, 700, true);
</script>
</body>
</html>
